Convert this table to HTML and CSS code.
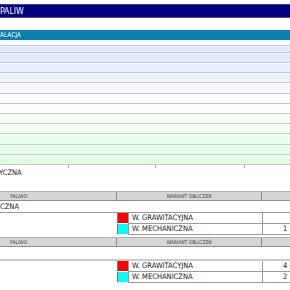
FILE: index.html
```html
<!DOCTYPE html>
<html>
<head>
<meta charset="utf-8">
<link rel="stylesheet" href="styles.css">
</head>
<body>
<div class="page">
  <div class="titlebar"><span class="title">PALIW</span></div>
  <div class="sectionbar"><span class="section">INSTALACJA</span></div>
  <div class="prechart"></div>
  <div class="chart">
    <div class="band first"></div>
    <div class="band"></div>
    <div class="band"></div>
    <div class="band"></div>
    <div class="band tall"></div>
    <div class="band"></div>
    <div class="band"></div>
    <div class="band"></div>
    <div class="band"></div>
    <div class="band tall"></div>
    <div class="band"></div>
    <div class="band last"></div>
  </div>
  <div class="ticks">
    <i class="tick t1"></i><i class="tick t2"></i><i class="tick t3"></i>
  </div>
  <div class="caption">YCZNA</div>

  <div class="thead">
    <div class="th c1">PALIWO</div>
    <div class="th c2">WARIANT OBLICZEŃ</div>
    <div class="th c3"></div>
  </div>
  <div class="group">CZNA</div>
  <div class="vrow">
    <div class="blank"></div><div class="sw red"></div>
    <div class="name">W. GRAWITACYJNA</div><div class="val">987,65</div>
  </div>
  <div class="vrow">
    <div class="blank"></div><div class="sw cyan"></div>
    <div class="name">W. MECHANICZNA</div><div class="val">1 234,56</div>
  </div>

  <div class="thead second">
    <div class="th c1">PALIWO</div>
    <div class="th c2">WARIANT OBLICZEŃ</div>
    <div class="th c3"></div>
  </div>
  <div class="group light"></div>
  <div class="vrow">
    <div class="blank"></div><div class="sw red"></div>
    <div class="name">W. GRAWITACYJNA</div><div class="val">4 058,90</div>
  </div>
  <div class="vrow">
    <div class="blank"></div><div class="sw cyan"></div>
    <div class="name">W. MECHANICZNA</div><div class="val">2 345,10</div>
  </div>
</div>
</body>
</html>
```

FILE: styles.css
```css
html, body {
  margin: 0;
  padding: 0;
  background: #ffffff;
  overflow: hidden;
}

.page {
  width: 290px;
  height: 290px;
  overflow: hidden;
  font-family: "DejaVu Sans Condensed", "DejaVu Sans", sans-serif;
  font-stretch: condensed;
  color: #222222;
}

.titlebar {
  margin-top: 4px;
  height: 12px;
  background: #000080;
  border-top: 1px solid #3c3c9c;
  border-bottom: 1px solid #4a4aa8;
  display: flex;
  align-items: center;
  overflow: hidden;
}

.title {
  color: #ffffff;
  font-size: 8.6px;
  line-height: 12px;
  white-space: nowrap;
}

.sectionbar {
  margin-top: 12px;
  height: 10px;
  background: #0a80ae;
  display: flex;
  align-items: center;
  overflow: hidden;
}

.section {
  color: #ffffff;
  font-size: 6.5px;
  line-height: 10px;
  white-space: nowrap;
  margin-left: -13px;
}

.prechart {
  height: 4px;
  margin-bottom: 1px;
}

.chart {
  display: flex;
  flex-direction: column;
  background: linear-gradient(#dbe8fc 0%, #eef4fe 30%, #ffffff 50%, #f4fef2 65%, #dffcdf 100%);
  border-bottom: 1px solid #c8c8c8;
}

.band {
  height: 10px;
  box-sizing: border-box;
  border-top: 1px solid #c9c9c9;
  box-shadow: inset 0 1px 0 rgba(255, 255, 255, 0.6);
}

.band.first {
  height: 7px;
}

.band.tall {
  height: 11px;
}

.ticks {
  position: relative;
  height: 3px;
}

.tick {
  position: absolute;
  top: 0;
  width: 1px;
  height: 3px;
  background: #a8a8a8;
}

.t1 { left: 68px; }
.t2 { left: 155px; }
.t3 { left: 244px; }

.caption {
  height: 23px;
  font-size: 7.5px;
  line-height: 10px;
  white-space: nowrap;
  margin-left: -1px;
}

.thead {
  display: grid;
  grid-template-columns: 117px 145px 60px;
  height: 10px;
  box-sizing: border-box;
  background: #d6d6d6;
  border-top: 1px solid #b0b0b0;
  border-bottom: 1px solid #8e8e8e;
  width: 322px;
}

.thead.second {
  margin-top: 2px;
}

.th {
  font-size: 5px;
  line-height: 8px;
  color: #444444;
  white-space: nowrap;
  border-right: 1px solid #8e8e8e;
}

.th.c1 {
  padding-left: 10px;
}

.th.c2 {
  text-align: center;
}

.group {
  height: 12px;
  box-sizing: border-box;
  border-bottom: 1px solid #9a9a9a;
  font-size: 7.5px;
  line-height: 11px;
  white-space: nowrap;
}

.group.light {
  border-bottom: 2px solid #cbcbcb;
  height: 14px;
}

.vrow {
  display: grid;
  grid-template-columns: 117px 11px 134px 54px;
  height: 11px;
  width: 316px;
}

.blank {
  background: #ffffff;
}

.sw {
  box-sizing: border-box;
  border-left: 1px solid #7a7a7a;
  border-bottom: 1px solid #ffffff;
}

.red { background: #ff0000; }
.cyan { background: #00ffff; }

.name, .val {
  box-sizing: border-box;
  border-left: 1px solid #9a9a9a;
  border-bottom: 1px solid #9a9a9a;
  font-size: 7.5px;
  line-height: 10px;
  white-space: nowrap;
  overflow: hidden;
}

.name {
  padding-left: 3px;
}

.val {
  text-align: right;
  padding-right: 3px;
}
```
